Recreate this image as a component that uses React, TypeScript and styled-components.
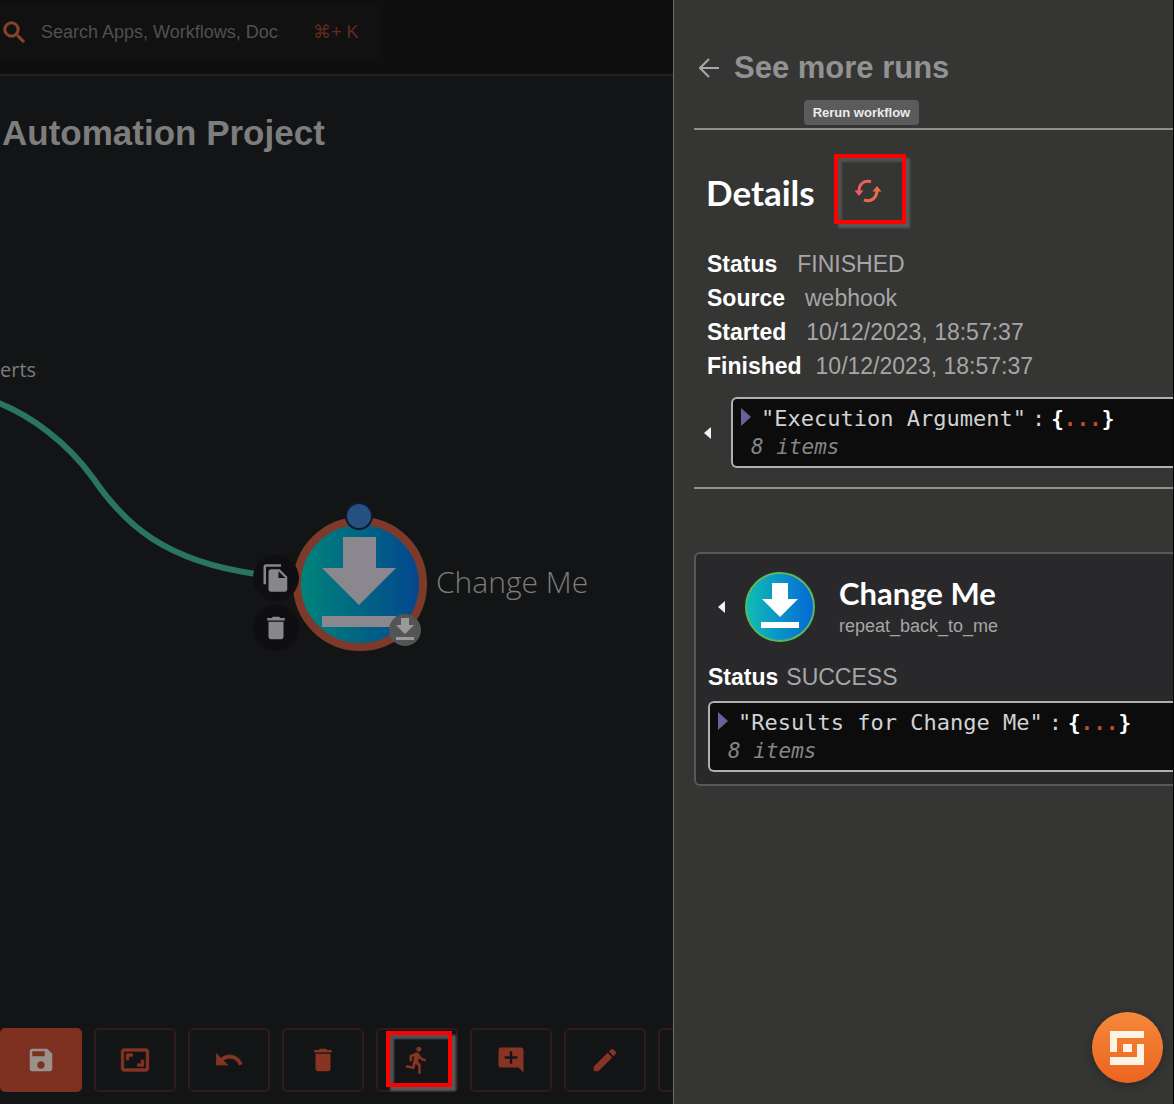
import React from "react";
import styled, { createGlobalStyle } from "styled-components";
import {
  MdAddComment,
  MdAspectRatio,
  MdDelete,
  MdDirectionsRun,
  MdFileCopy,
  MdSave,
  MdSearch,
  MdUndo,
} from "react-icons/md";

const sans = `"Liberation Sans", Arial, sans-serif`;
const mono = `"DejaVu Sans Mono", monospace`;
const heading = `Lato, sans-serif`;
const canvasFont = `"Open Sans", "Noto Sans", sans-serif`;

const GlobalStyle = createGlobalStyle`
  * { box-sizing: border-box; }
  body { margin: 0; background: #131415; font-family: ${sans}; }
  button, input { font: inherit; color: inherit; border: 0; padding: 0; background: none; }
  h1, h2, h3, p, dl, dd { margin: 0; }
  /* Material icons carry an empty bounding path that must stay invisible */
  svg path[fill="none"] { stroke: none; }
`;

const Page = styled.div`
  display: flex;
  min-height: 100vh;
  overflow: hidden;
  border-right: 1px solid #050505;
`;

/* ---------- editor ---------- */

const Editor = styled.main`
  flex: 1;
  min-width: 0;
  display: flex;
  flex-direction: column;
  overflow: hidden;
`;

const TopBar = styled.header`
  display: flex;
  align-items: center;
  height: 76px;
  padding-bottom: 10px;
  background: #0f0f10;
  border-bottom: 2px solid #232323;
`;

const SearchBox = styled.label`
  display: flex;
  align-items: center;
  width: 382px;
  height: 60px;
  background: #111112;
  color: #8a4526;
`;

const SearchInput = styled.input`
  width: 238px;
  margin: 0 34px 0 12px;
  font-size: 18px;
  color: #555;
  outline: none;
  &::placeholder { color: #505050; opacity: 1; }
`;

const Shortcut = styled.kbd`
  font: 18px ${sans};
  color: #66291c;
  white-space: nowrap;
`;

const Title = styled.h1`
  padding: 37px 2px 0;
  font-size: 35px;
  line-height: 40px;
  color: #7d7d7d;
`;

const Canvas = styled.section`
  position: relative;
  flex: 1;
  min-height: 640px;
  font-family: ${canvasFont};
`;

const Edge = styled.svg`
  position: absolute;
  left: 0;
  top: 227px;
`;

const NodeLabel = styled.span<{ $x: number; $y: number; $size: number; $weight: number }>`
  position: absolute;
  left: ${(p) => p.$x}px;
  top: ${(p) => p.$y}px;
  font-size: ${(p) => p.$size}px;
  font-weight: ${(p) => p.$weight};
  line-height: 40px;
  color: #7c7c7c;
  white-space: nowrap;
`;

const NodeShape = styled.svg`
  position: absolute;
  left: 290px;
  top: 345px;
`;

const NodeAction = styled.button<{ $y: number }>`
  position: absolute;
  left: 253px;
  top: ${(p) => p.$y}px;
  display: grid;
  place-items: center;
  width: 46px;
  height: 46px;
  border-radius: 50%;
  background: #0f0f11;
  color: #87878a;
`;

const Toolbar = styled.nav`
  display: flex;
  gap: 12px;
  padding-bottom: 12px;
`;

const ToolButton = styled.button<{ $primary?: boolean }>`
  position: relative;
  flex: 0 0 82px;
  display: grid;
  place-items: center;
  height: 64px;
  border-radius: 5px;
  border: 2px solid ${(p) => (p.$primary ? "#7d3020" : "#32191a")};
  background: ${(p) => (p.$primary ? "#7d3020" : "transparent")};
  color: ${(p) => (p.$primary ? "#99928c" : "#873424")};
`;

const Highlight = styled.span<{ $w: number; $h: number; $x: number; $y: number }>`
  position: absolute;
  left: ${(p) => p.$x}px;
  top: ${(p) => p.$y}px;
  width: ${(p) => p.$w}px;
  height: ${(p) => p.$h}px;
  border: 4px solid #ff0000;
  box-shadow: 4px 4px 2px #585858, inset 4px 4px 2px #505050;
  pointer-events: none;
`;

/* ---------- run drawer ---------- */

const Drawer = styled.aside`
  display: flex;
  flex-direction: column;
  width: 500px;
  padding: 48px 0 0 20px;
  border-left: 1px solid #6c6c6c;
  background: #353534;
  color: #a6a6a6;
`;

const Back = styled.button`
  display: flex;
  align-items: center;
  gap: 14px;
  padding: 0 0 0 5px;
  height: 40px;
  font-size: 31px;
  font-weight: 700;
  color: #929292;
  cursor: pointer;
`;

const Rule = styled.hr<{ $top: number }>`
  width: 100%;
  height: 2px;
  margin: ${(p) => p.$top}px 0 0;
  border: 0;
  background: #8f8f8f;
`;

const DetailsHeader = styled.div`
  display: flex;
  align-items: center;
  gap: 19px;
  margin-top: 24px;
  padding-left: 12px;
`;

const SectionTitle = styled.h2`
  padding-top: 6px;
  font: 700 35px/40px ${heading};
  color: #fff;
`;

const RerunButton = styled.button`
  position: relative;
  display: grid;
  place-items: center;
  width: 72px;
  height: 70px;
  padding: 4px 4px 0 0;
`;

const Tooltip = styled.span`
  position: absolute;
  left: -30px;
  top: -54px;
  padding: 0 9px;
  border-radius: 4px;
  background: #5b5b5b;
  color: #ececec;
  font: 700 13px/25px ${sans};
  white-space: nowrap;
`;

const Facts = styled.dl`
  display: grid;
  margin-top: 23px;
  padding-left: 13px;
`;

const Fact = styled.div<{ $gap: number }>`
  display: flex;
  gap: ${(p) => p.$gap}px;
  font-size: 23px;
  line-height: 34px;
  dt { font-weight: 700; color: #fff; }
  dd { color: #a6a6a6; }
`;

const ArgumentRow = styled.div`
  display: flex;
  align-items: center;
  gap: 20px;
  margin-top: 14px;
  padding-left: 10px;
`;

const Json = styled.div`
  flex: 1;
  height: 71px;
  padding: 5px 0 0 8px;
  border: 2px solid #b0b0b0;
  border-right: 0;
  border-radius: 6px 0 0 6px;
  background: #0c0c0d;
  font: 22px/30px ${mono};
  color: #d2d2d2;
`;

const JsonLine = styled.button`
  display: flex;
  align-items: center;
  height: 30px;
  white-space: pre;
  svg { margin: 0 10px 4px 0; }
  b, i { font-size: 21px; }
  b { color: #fff; }
  i { color: #b9512a; font-style: normal; font-weight: 700; }
`;

const Colon = styled.span`
  margin: 0 6px;
`;

const Count = styled.p`
  padding-left: 10px;
  font-size: 21px;
  line-height: 26px;
  font-style: italic;
  color: #858585;
`;

const Card = styled.section`
  margin-top: 63px;
  padding: 18px 0 12px 12px;
  border: 2px solid #58585a;
  border-right: 0;
  border-radius: 6px 0 0 6px;
  background: #29292b;
`;

const CardHeader = styled.div`
  display: flex;
  align-items: center;
  padding-left: 10px;
`;

const CardIcon = styled.svg`
  margin: 0 24px 0 20px;
`;

const CardTitle = styled.h3`
  font: 700 31px/38px ${heading};
  color: #fff;
`;

const CardSub = styled.p`
  font-size: 18px;
  line-height: 28px;
`;

const CardFact = styled.dl`
  margin: 18px 0 7px;
`;

const Chat = styled.button`
  position: fixed;
  right: 11px;
  bottom: 21px;
  width: 71px;
  height: 71px;
  border-radius: 50%;
  background: linear-gradient(#f5883a, #ec6420);
  box-shadow: 0 2px 10px rgba(0, 0, 0, 0.3);
`;

const Caret = () => (
  <svg width="7" height="12" viewBox="0 0 7 12" aria-hidden>
    <path d="M7 0v12L0 6z" fill="#f2f2f2" />
  </svg>
);

const Pencil = ({ size }: { size: number }) => (
  <svg width={size} height={size} viewBox="0 0 24 24" fill="currentColor" aria-hidden>
    <path d="M3 17.2V20a1 1 0 0 0 1 1h2.8L17.8 9.9l-3.7-3.7zM20.7 7a1.2 1.2 0 0 0 0-1.6l-2.1-2.1a1.2 1.2 0 0 0-1.6 0L15 5.2 18.8 9z" />
  </svg>
);

const Rerun = () => (
  <svg width="28" height="24" viewBox="0 0 28 24" aria-hidden>
    <defs>
      <linearGradient id="rerun" x1="0" x2="28" y1="0" y2="0" gradientUnits="userSpaceOnUse">
        <stop offset="0" stopColor="#f0566a" />
        <stop offset="1" stopColor="#e8743c" />
      </linearGradient>
    </defs>
    <g fill="none" stroke="url(#rerun)" strokeWidth="3">
      <path d="M17 2.8C10.5 0.5 5 5 5 12" />
      <path d="M10 21C17 23.5 23 19 23 11" />
    </g>
    <path d="M0.5 11.5h9L5 17zM18.5 12.5h9L23 7z" fill="url(#rerun)" />
  </svg>
);

function JsonBox({ name }: { name: string }) {
  return (
    <Json>
      <JsonLine>
        <svg width="10" height="18" viewBox="0 0 10 18" aria-hidden>
          <path d="M0 0l10 9-10 9z" fill="#6b5f9c" />
        </svg>
        <span>"{name}"</span>
        <Colon>:</Colon>
        <b>{"{"}</b>
        <i>...</i>
        <b>{"}"}</b>
      </JsonLine>
      <Count>8 items</Count>
    </Json>
  );
}

const facts = [
  { label: "Status", value: "FINISHED", gap: 20 },
  { label: "Source", value: "webhook", gap: 20 },
  { label: "Started", value: "10/12/2023, 18:57:37", gap: 20 },
  { label: "Finished", value: "10/12/2023, 18:57:37", gap: 14 },
];

const tools = [
  { label: "Save", Icon: MdSave, primary: true },
  { label: "Fit to screen", Icon: MdAspectRatio, weight: 0.6 },
  { label: "Undo", Icon: MdUndo, weight: 0.6 },
  { label: "Delete", Icon: MdDelete },
  { label: "Show runs", Icon: MdDirectionsRun, marked: true },
  { label: "Add comment", Icon: MdAddComment },
  { label: "Edit", Icon: Pencil },
  { label: "More", Icon: null },
];

export default function App() {
  return (
    <>
      <GlobalStyle />
      <Page>
        <Editor>
          <TopBar>
            <SearchBox>
              <MdSearch size={29} strokeWidth={0.5} aria-hidden />
              <SearchInput aria-label="Search" placeholder="Search Apps, Workflows, Docs" />
              <Shortcut>⌘+ K</Shortcut>
            </SearchBox>
          </TopBar>
          <Title>Automation Project</Title>
          <Canvas>
            <NodeLabel $x={0} $y={197} $size={20} $weight={400}>erts</NodeLabel>
            <Edge width="300" height="220" viewBox="0 380 300 220" fill="none" aria-hidden>
              <path
                d="M-4 402C30 415 67 442 93 478C125 525 165 561 256 574"
                stroke="#2a7562"
                strokeWidth="6"
              />
            </Edge>
            <NodeShape width="145" height="165" viewBox="290 498 145 165" aria-hidden>
              <defs>
                <linearGradient id="node" x1="0" x2="1">
                  <stop offset="0" stopColor="#00857a" />
                  <stop offset="1" stopColor="#03458f" />
                </linearGradient>
              </defs>
              <circle cx="360" cy="584" r="63" fill="url(#node)" stroke="#7d3a2a" strokeWidth="8" />
              <path d="M343 537h33v31h20l-37 37-37-37h21z M322 616h74v11h-74z" fill="#8a888e" />
              <circle cx="359" cy="516" r="13" fill="#25507f" stroke="#101a2a" strokeWidth="2" />
              <circle cx="405" cy="630" r="16" fill="#535555" />
              <path d="M401 618h8v7h5l-9 9-9-9h5z M396 637h18v3h-18z" fill="#999" />
            </NodeShape>
            <NodeAction $y={402} aria-label="Copy node"><MdFileCopy size={30} /></NodeAction>
            <NodeAction $y={452} aria-label="Delete node"><MdDelete size={30} /></NodeAction>
            <NodeLabel $x={436} $y={409} $size={30} $weight={300}>Change Me</NodeLabel>
          </Canvas>
          <Toolbar>
            {tools.map(({ label, Icon, primary, marked, weight }) => (
              <ToolButton key={label} $primary={primary} aria-label={label}>
                {Icon && <Icon size={30} strokeWidth={weight ?? 0} />}
                {marked && <Highlight $x={8} $y={1} $w={66} $h={56} />}
              </ToolButton>
            ))}
          </Toolbar>
        </Editor>

        <Drawer>
          <Back>
            <svg width="21" height="20" viewBox="0 0 21 20" fill="none" stroke="#a8a8a8" strokeWidth="2" aria-hidden>
              <path d="M20 10H2M10 1L1 10l9 9" />
            </svg>
            See more runs
          </Back>
          <Rule $top={40} />
          <DetailsHeader>
            <SectionTitle>Details</SectionTitle>
            <RerunButton aria-label="Rerun workflow">
              <Rerun />
              <Highlight $x={0} $y={0} $w={72} $h={70} />
              <Tooltip role="tooltip">Rerun workflow</Tooltip>
            </RerunButton>
          </DetailsHeader>
          <Facts>
            {facts.map((f) => (
              <Fact key={f.label} $gap={f.gap}>
                <dt>{f.label}</dt>
                <dd>{f.value}</dd>
              </Fact>
            ))}
          </Facts>
          <ArgumentRow>
            <Caret />
            <JsonBox name="Execution Argument" />
          </ArgumentRow>
          <Rule $top={19} />
          <Card>
            <CardHeader>
              <Caret />
              <CardIcon width="70" height="70" viewBox="0 0 70 70" aria-hidden>
                <defs>
                  <linearGradient id="card" x1="0" x2="1">
                    <stop offset="0" stopColor="#10bdb4" />
                    <stop offset="1" stopColor="#0568d8" />
                  </linearGradient>
                </defs>
                <circle cx="35" cy="35" r="34" fill="url(#card)" stroke="#5cb85c" strokeWidth="2" />
                <path d="M27 11h16v16h10L35 45 17 27h10z M16 50h38v6H16z" fill="#fff" />
              </CardIcon>
              <div>
                <CardTitle>Change Me</CardTitle>
                <CardSub>repeat_back_to_me</CardSub>
              </div>
            </CardHeader>
            <CardFact>
              <Fact $gap={8}>
                <dt>Status</dt>
                <dd>SUCCESS</dd>
              </Fact>
            </CardFact>
            <JsonBox name="Results for Change Me" />
          </Card>
        </Drawer>
        <Chat aria-label="Open chat">
          <svg width="71" height="71" viewBox="0 0 71 71" fill="#fff3e6" aria-hidden>
            <path d="M18 19h34v7H25v14h-7zM31 32h9v8h-9zM45 32h7v21H18v-8h27z" />
          </svg>
        </Chat>
      </Page>
    </>
  );
}
